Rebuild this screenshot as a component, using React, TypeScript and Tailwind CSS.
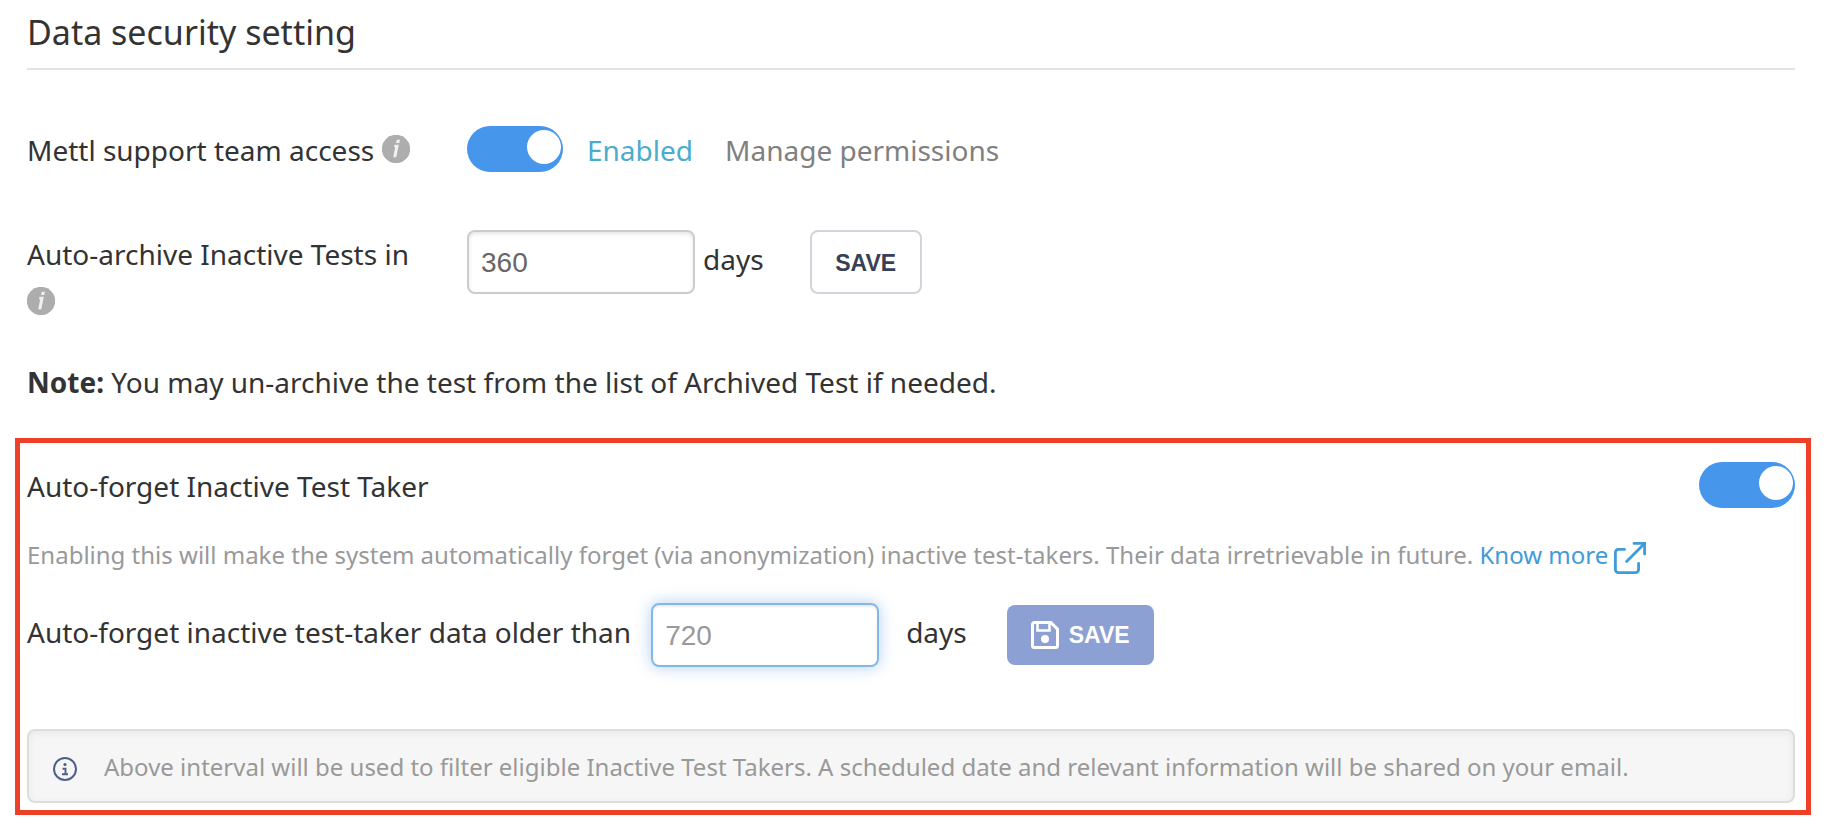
import React, { useState } from 'react';

interface SwitchProps {
  label: string;
  checked: boolean;
  onChange: (checked: boolean) => void;
}

const Switch: React.FC<SwitchProps> = ({ label, checked, onChange }) => (
  <input
    type="checkbox"
    role="switch"
    aria-label={label}
    checked={checked}
    onChange={(e) => onChange(e.target.checked)}
    className="appearance-none shrink-0 flex w-24 h-[46px] px-0.5 pt-1 rounded-full bg-gray-300 cursor-pointer checked:bg-[#4696ec] checked:justify-end before:block before:w-[34px] before:h-[34px] before:rounded-full before:bg-white"
  />
);

const HelpIcon: React.FC = () => (
  <svg viewBox="0 0 28 28" className="inline-block w-7 h-7 align-[-2px]" role="img" aria-label="Help">
    <circle cx="14" cy="14" r="14.2" fill="#adadad" />
    <path d="M14.8 4.8h3.2l-.7 3.200h-3.200zM12.500 9.800h4.300L14.300 22.200h-3.100l2-9.900h-1.200z" fill="#f0f0f0" />
  </svg>
);

const ExternalIcon: React.FC = () => (
  <svg
    viewBox="0 0 32 32"
    className="inline-block w-8 h-8 ml-1.5 align-[-10px]"
    fill="none"
    stroke="currentColor"
    strokeWidth="2.8"
    strokeLinecap="round"
    aria-hidden="true"
  >
    <path d="M10.500 7.400H4.400a3 3 0 0 0-3 3v17.200a3 3 0 0 0 3 3h17.200a3 3 0 0 0 3-3V21.500" />
    <path d="M12.600 19.400 30 2" />
    <path d="M20 1.400h10.600V12" strokeLinejoin="miter" />
  </svg>
);

const SaveIcon: React.FC = () => (
  <svg viewBox="0 0 28 28" className="w-7 h-7" fill="none" stroke="currentColor" strokeWidth="3" aria-hidden="true">
    <path d="M3.500 1.500h16.300l6.700 6.700v16.300a2 2 0 0 1-2 2h-21a2 2 0 0 1-2-2v-21a2 2 0 0 1 2-2z" />
    <path d="M6.500 2v7.500h12V2" strokeWidth="2.600" />
    <circle cx="14" cy="18" r="4" fill="currentColor" stroke="none" />
  </svg>
);

const InfoIcon: React.FC = () => (
  <svg viewBox="0 0 24 24" className="mt-1 w-6 h-6 shrink-0" aria-hidden="true">
    <circle cx="12" cy="12" r="11" fill="none" stroke="#4d5f8c" strokeWidth="2" />
    <circle cx="12" cy="7.500" r="1.600" fill="#4d5f8c" />
    <path d="M9.500 11.800h3v5.200M9 17.200h6" fill="none" stroke="#4d5f8c" strokeWidth="1.900" />
  </svg>
);

const App: React.FC = () => {
  const [supportAccess, setSupportAccess] = useState(true);
  const [autoForget, setAutoForget] = useState(true);
  const [archiveDays, setArchiveDays] = useState('360');
  const [forgetDays, setForgetDays] = useState('');

  return (
    <main className="bg-white pl-[15px] pr-[19px] pt-2 font-['Noto_Sans',sans-serif] text-[28px] leading-[48px] text-[#333333]">
      <div className="pl-3 pr-4">
        <h1 className="text-[34px] leading-[48px] pb-3 border-b-2 border-[#e3e3e3]">Data security setting</h1>

        {/* Support access */}
        <div className="mt-14 flex items-start">
          <div className="w-[400px] mr-10 shrink-0">
            Mettl support team access <HelpIcon />
          </div>
          <Switch label="Mettl support team access" checked={supportAccess} onChange={setSupportAccess} />
          <span className="ml-6 text-[#4bacce]">{supportAccess ? 'Enabled' : 'Disabled'}</span>
          <a href="#permissions" className="ml-8 text-[#808080]">
            Manage permissions
          </a>
        </div>

        {/* Auto-archive */}
        <div className="mt-14 flex items-start">
          <div className="w-[400px] mr-10 shrink-0">
            <label htmlFor="archive-days">Auto-archive Inactive Tests in</label> <HelpIcon />
          </div>
          <input
            id="archive-days"
            type="text"
            value={archiveDays}
            onChange={(e) => setArchiveDays(e.target.value)}
            className="w-[228px] h-16 px-3 pt-0.5 border-2 border-[#cccccc] rounded-lg shadow-[inset_0_2px_4px_rgba(0,0,0,0.1)] outline-none font-['Liberation_Sans',sans-serif] text-[#666666]"
          />
          <span className="ml-2 mt-[5px]">days</span>
          <button
            type="button"
            className="ml-[46px] w-28 h-16 pt-0.5 border-2 border-[#d0d5db] rounded-lg font-['Liberation_Sans',sans-serif] text-[23px] font-bold text-[#374057] cursor-pointer"
          >
            SAVE
          </button>
        </div>

        <p className="mt-8">
          <strong>Note:</strong> You may un-archive the test from the list of Archived Test if needed.
        </p>
      </div>

      {/* Auto-forget */}
      <section className="mt-8 border-5 border-[#ee4026] pl-[7px] pr-[11px] pt-[19px] pb-[7px]">
        <div className="flex items-start justify-between">
          <h2>Auto-forget Inactive Test Taker</h2>
          <Switch label="Auto-forget Inactive Test Taker" checked={autoForget} onChange={setAutoForget} />
        </div>

        <p className="mt-[27px] text-2xl leading-9 text-[#999999]">
          Enabling this will make the system automatically forget (via anonymization) inactive test-takers. Their data
          irretrievable in future.{' '}
          <a href="#know-more" className="text-[#3f9bd9]">
            Know more
            <ExternalIcon />
          </a>
        </p>

        <div className="mt-[29px] flex items-start">
          <label htmlFor="forget-days" className="mt-[5px]">
            Auto-forget inactive test-taker data older than
          </label>
          <input
            id="forget-days"
            type="text"
            placeholder="720"
            value={forgetDays}
            onChange={(e) => setForgetDays(e.target.value)}
            className="ml-5 w-[228px] h-16 px-3 pt-0.5 border-2 border-[#83b7ea] rounded-lg shadow-[inset_0_2px_2px_rgba(0,0,0,0.08),0_0_16px_rgba(82,150,225,0.45)] outline-none font-['Liberation_Sans',sans-serif] placeholder:text-[#999999]"
          />
          <span className="ml-[27px] mt-[5px]">days</span>
          <button
            type="button"
            className="ml-10 mt-0.5 h-15 px-6 flex items-center gap-2.5 rounded-lg bg-[#8ca0d3] font-['Liberation_Sans',sans-serif] text-[23px] font-bold text-white cursor-pointer"
          >
            <SaveIcon />
            SAVE
          </button>
        </div>

        <div className="mt-[62px] flex items-center gap-[27px] px-6 pt-[18px] pb-4 border-2 border-[#dcdddd] rounded-lg bg-[#f6f6f6] shadow-[inset_0_2px_8px_rgba(0,0,0,0.06)] text-2xl leading-9 text-[#999999]">
          <InfoIcon />
          <p>
            Above interval will be used to filter eligible Inactive Test Takers. A scheduled date and relevant
            information will be shared on your email.
          </p>
        </div>
      </section>
    </main>
  );
};

export default App;
